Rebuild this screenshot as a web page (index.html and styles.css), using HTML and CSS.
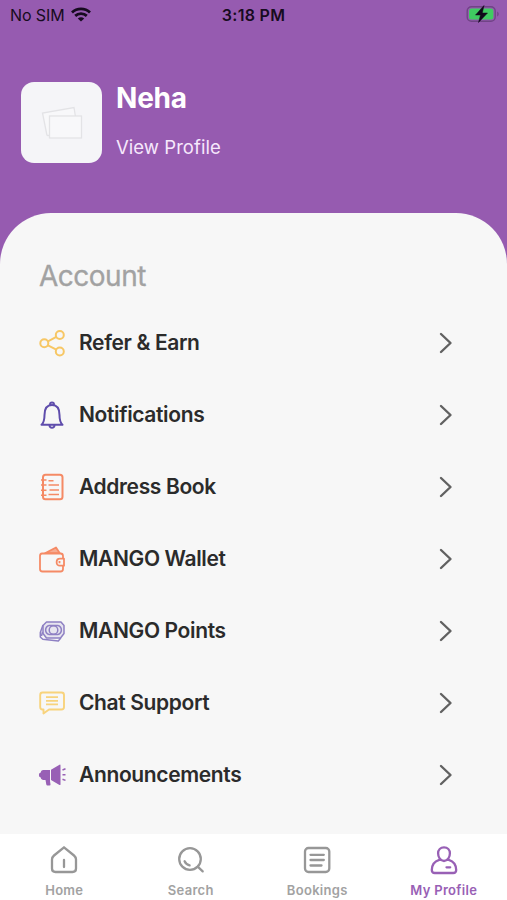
FILE: index.html
```html
<!DOCTYPE html>
<html lang="en">
<head>
<meta charset="utf-8">
<title>My Profile</title>
<link rel="stylesheet" href="styles.css">
</head>
<body>
<div class="screen">
  <header class="hero">
    <div class="status">
      <div class="carrier"><span>No SIM</span>
        <svg width="20" height="15" viewBox="0 0 20 15" fill="none" stroke="#170b20" stroke-width="2.8"><path d="M1 5.4C6 .7 14 .7 19 5.4M4.200 8.900c3.300-3 8.300-3 11.600 0"/><path d="M10 14.600 6.800 11.500c1.800-1.600 4.600-1.600 6.400 0z" fill="#170b20" stroke="none"/></svg>
      </div>
      <time class="time">3:18 PM</time>
      <svg class="battery" width="34" height="18" viewBox="0 0 34 18"><rect x="1.200" y="1.700" width="28" height="14.600" rx="4.300" fill="none" stroke="#704486" stroke-width="1.400"/><path d="M31.200 6.500v5c2-.8 2-4.200 0-5z" fill="#704486"/><rect x="3" y="3.500" width="24.400" height="11" rx="2.500" fill="#3fcb61"/><path d="M18 .5 9.500 10h5L12.500 17.500 21.500 8h-5.200z" fill="#10091a" stroke="#10091a" stroke-width=".5"/></svg>
    </div>
    <div class="user">
      <div class="avatar">
        <svg width="44" height="36" viewBox="0 0 44 36" fill="#f8f8fa" stroke="#e3e3e6" stroke-width="1.300"><path d="M7 30.500 2.500 8 34 2.500 35.500 12"/><path d="M7 30.500H10"/><rect x="9.500" y="11" width="32" height="22"/></svg>
      </div>
      <div class="who"><h1 class="name">Neha</h1><a class="view">View Profile</a></div>
    </div>
  </header>
  <main class="sheet">
    <h2 class="title">Account</h2>
    <ul class="menu">
      <li class="row"><svg class="icon" viewBox="0 0 28 28" fill="none" stroke="#f7c765" stroke-width="2"><circle cx="6.300" cy="14.300" r="4"/><circle cx="21.800" cy="6" r="4"/><circle cx="21.800" cy="22.500" r="4"/><path d="m10 12.300 8.300-4.400M10 16.300l8.300 4.300"/></svg><span class="label">Refer &amp; Earn</span><svg class="chev" viewBox="0 0 14 22"><path d="m2 2 9.500 9L2 20"/></svg></li>
      <li class="row"><svg class="icon" viewBox="0 0 28 28" fill="none" stroke="#5f4dac" stroke-width="2"><path d="M12 3.600a2 2 0 1 1 4 0M3.500 23.800c2.700-2.500 3-5 3-9.800C6.500 8 9 4 14 4s7.500 4 7.500 10c0 4.800.3 7.300 3 9.800zM11.500 24.500c.3 3 4.700 3 5 0" stroke-linejoin="round"/></svg><span class="label">Notifications</span><svg class="chev" viewBox="0 0 14 22"><path d="m2 2 9.500 9L2 20"/></svg></li>
      <li class="row"><svg class="icon" viewBox="0 0 28 28" fill="none" stroke="#f58a65" stroke-width="2"><rect x="5" y="1.700" width="19.500" height="24.600" rx="2.500"/><path d="M3 7H8.500M3 12H8.500M3 17.200H8.500M3 22.200H8.500M10.500 7.800h5M10.500 12H21M11.500 17H21M10.500 21.500H21" stroke-width="1.600"/></svg><span class="label">Address Book</span><svg class="chev" viewBox="0 0 14 22"><path d="m2 2 9.500 9L2 20"/></svg></li>
      <li class="row"><svg class="icon" viewBox="0 0 28 28" fill="none" stroke="#f58a65" stroke-width="1.800" stroke-linejoin="round"><path d="M25 13V11q0-2.500-2.500-2.500H4Q2 8.500 2 11v13q0 2.500 2.500 2.500h18q2.500 0 2.500-2.500v-3.500"/><path d="m7 8.200 11-5.700 3.800 5.700z" fill="#f58a65" fill-opacity=".7"/><path d="M26 13.700h-4c-4.500 0-4.500 7 0 7h4zM21.500 16v2.300"/></svg><span class="label">MANGO Wallet</span><svg class="chev" viewBox="0 0 14 22"><path d="m2 2 9.500 9L2 20"/></svg></li>
      <li class="row"><svg class="icon" viewBox="0 0 28 28" fill="none" stroke="#8e80c3" stroke-width="1.500" stroke-linejoin="round"><path d="M8.500 5H23l3 3.500v8L22.500 21h-14L5 16.500v-8z" fill="#8e80c3" fill-opacity=".15"/><path d="M5 8 2.300 15.500v4.500l2.500 2.300 15.500 1.700 2.500-3M4.500 15l-1 4"/><circle cx="15.500" cy="13" r="4.300"/><path d="M11 8.500c-4.500 1.500-4.500 7.500 0 9M20 8.500c4.500 1.500 4.500 7.500 0 9M11 8.500h9M11 17.500h9"/></svg><span class="label">MANGO Points</span><svg class="chev" viewBox="0 0 14 22"><path d="m2 2 9.500 9L2 20"/></svg></li>
      <li class="row"><svg class="icon" viewBox="0 0 28 28" fill="none" stroke="#f8d37c" stroke-width="1.900" stroke-linejoin="round"><path d="M4.500 3.500h19q2.500 0 2.500 2.500v12q0 2.500-2.500 2.500H11l-5.500 4v-4h-1Q2.200 20.500 2.200 18V6q0-2.500 2.300-2.500z"/><path d="M8 8.200h12M8 11.800h12M8 15.400h12" stroke-width="1.700"/></svg><span class="label">Chat Support</span><svg class="chev" viewBox="0 0 14 22"><path d="m2 2 9.500 9L2 20"/></svg></li>
      <li class="row"><svg class="icon" viewBox="0 0 28 28" fill="#9860b5"><path d="M5 9h7v11l.5 3.500q.2 1-1 1H9.500q-1 0-1.200-1L7.500 19H5q-2 0-2.500-2.800Q.9 16.200.9 14t1.600-2.200Q3 9 5 9zM13 8.700l8.500-5q1-.5 1 .7v18.800q0 1.200-1 .7l-8.500-5z"/><path d="m24.500 9 3-1.200M24.500 13.800h3M24.500 18.200l3 1.200" stroke="#9860b5" stroke-width="1.500"/></svg><span class="label">Announcements</span><svg class="chev" viewBox="0 0 14 22"><path d="m2 2 9.500 9L2 20"/></svg></li>
    </ul>
  </main>
  <nav class="tabs">
    <a class="tab"><svg class="tabicon" viewBox="0 0 30 30"><path d="M15 2.300 25 10.500q2 1.700 2 4V23.500q0 3.500-3.500 3.500H6.500Q3 27 3 23.500V14.500q0-2.300 2-4zM15 15v7"/></svg><span>Home</span></a>
    <a class="tab"><svg class="tabicon" viewBox="0 0 30 30"><circle cx="14" cy="14" r="10.800"/><path d="m21.700 21.700 5 4.700M8.600 16.200q1.400 3.200 5 4.200"/></svg><span>Search</span></a>
    <a class="tab"><svg class="tabicon" viewBox="0 0 30 30"><rect x="3" y="3" width="24.300" height="24" rx="3.500"/><path d="M8.500 9.800h13.300M8.500 15h13.300M8.500 20.500h11"/></svg><span>Bookings</span></a>
    <a class="tab active"><svg class="tabicon" viewBox="0 0 30 30"><path d="M15 2.300c3.500 0 5.900 2.500 5.900 6s-2 7.700-5.900 7.700-5.900-4.200-5.900-7.700 2.400-6 5.900-6zM10.300 14.800C5 16.500 2.800 20.500 2.800 25q0 3 3 3h18.400q3 0 3-3c0-4.500-2.200-8.500-7.500-10.200M17.500 22.300h3.700"/></svg><span>My Profile</span></a>
  </nav>
</div>
</body>
</html>
```
FILE: styles.css
```css
* { box-sizing: border-box; }
body { margin: 0; font-family: Inter, "Liberation Sans", sans-serif; }
h1, h2, ul { margin: 0; padding: 0; list-style: none; }
svg { display: block; flex: none; }
.screen { width: 507px; height: 900px; display: flex; flex-direction: column; background: linear-gradient(#965bb0 300px, #f7f7f7 300px); overflow: hidden; }
.hero { height: 212.5px; flex: none; }
.status { height: 30px; padding: 0 7px 0 10px; display: grid; grid-template-columns: 1fr auto 1fr; align-items: center; color: #170b20; font-size: 16px; line-height: 30px; }
.carrier { display: flex; align-items: center; gap: 6px; letter-spacing: -0.1px; }
.carrier svg { margin-top: -1px; }
.time { font-weight: 600; letter-spacing: 0.3px; margin: 0 3px 0 0; }
.battery { justify-self: end; margin-top: -2px; }
.user { display: flex; padding: 52px 21px 0; gap: 14px; }
.avatar { width: 81px; height: 81px; border-radius: 13px; background: #f5f5f8; display: flex; align-items: center; justify-content: center; }
.who { color: #fff; }
.name { font-size: 28px; font-weight: 700; line-height: 32px; letter-spacing: -0.2px; }
.view { display: block; margin-top: 21px; font-size: 18.5px; line-height: 24px; letter-spacing: 0.05px; color: #f6e8fc; }
.sheet { flex: 1; background: #f7f7f7; border-radius: 51px 51px 0 0; padding: 45px 54px 0 38px; }
.title { margin-left: 1px; font-size: 28px; line-height: 36px; font-weight: 400; letter-spacing: -0.5px; color: #a2a2a2; -webkit-text-stroke: 0.3px #a2a2a2; }
.menu { padding-top: 13.3px; }
.row { height: 72.1px; display: flex; align-items: center; }
.icon { width: 28px; height: 28px; }
.label { margin-left: 13px; flex: 1; font-size: 21px; line-height: 28px; font-weight: 600; color: #2b2b2b; letter-spacing: -0.36px; }
.chev { width: 14px; height: 22px; fill: none; stroke: #616161; stroke-width: 2.4; stroke-linecap: round; stroke-linejoin: round; }
.tabs { height: 66px; flex: none; background: #fff; display: grid; grid-template-columns: repeat(4, 1fr); padding-left: 1px; }
.tab { display: flex; flex-direction: column; align-items: center; padding-top: 11px; color: #a2a2a2; font-size: 13px; line-height: 18px; font-weight: 600; letter-spacing: 0.3px; }
.tabicon { width: 30px; height: 30px; margin-bottom: 6px; fill: none; stroke: #979797; stroke-width: 2.3; stroke-linecap: round; stroke-linejoin: round; }
.active { color: #9860b5; }
.active .tabicon { stroke: #9860b5; }
```
